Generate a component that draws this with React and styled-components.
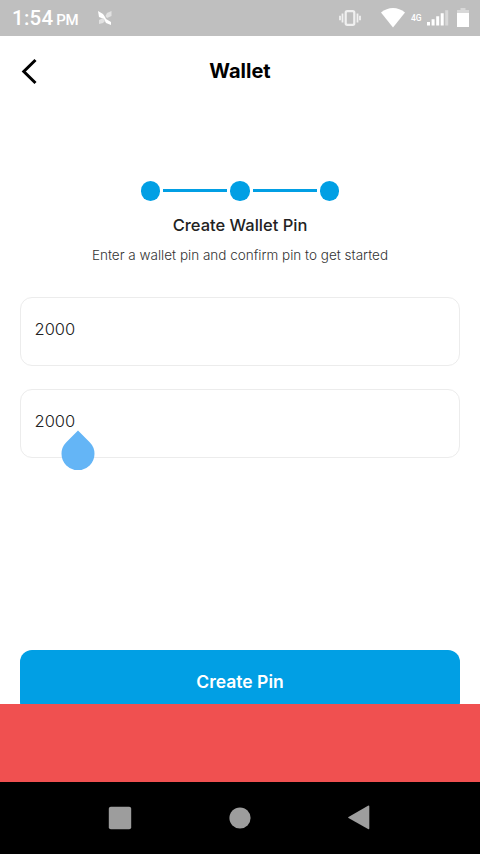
import React from 'react';
import styled, { createGlobalStyle } from 'styled-components';

const GlobalStyle = createGlobalStyle`
  * {
    box-sizing: border-box;
  }

  body {
    margin: 0;
    background: #ffffff;
    font-family: Inter, 'Open Sans', sans-serif;
  }
`;

const Screen = styled.div`
  display: flex;
  flex-direction: column;
  width: 480px;
  height: 854px;
  overflow: hidden;
`;

const StatusBar = styled.div`
  display: flex;
  flex: none;
  align-items: center;
  height: 36px;
  padding: 0 11px 0 12px;
  background: #bfbfbf;
  color: #ffffff;
  font-family: Roboto, sans-serif;
  font-weight: 500;
`;

const Clock = styled.div`
  display: flex;
  align-items: baseline;
  gap: 3px;
  width: 86px;
  padding-top: 2px;
  font-size: 20.5px;
  line-height: 24px;
  letter-spacing: 0.25px;
`;

const Period = styled.span`
  font-size: 15px;
  letter-spacing: -0.4px;
`;

const StatusIcons = styled.div`
  display: flex;
  align-items: center;
  margin-left: auto;
`;

const StatusIcon = styled.svg`
  display: block;
  flex: none;
  margin-right: ${({ $gap }) => $gap || 0}px;
`;

const Network = styled.span`
  width: 16px;
  font-size: 8.5px;
  line-height: 10px;
`;

const Page = styled.main`
  display: flex;
  flex: none;
  flex-direction: column;
  height: 668px;
  padding: 0 20px;
  overflow: hidden;
  background: #ffffff;
`;

const Header = styled.header`
  display: grid;
  flex: none;
  grid-template-columns: 40px 1fr 40px;
  align-items: center;
  height: 70px;
`;

const BackButton = styled.button`
  display: flex;
  padding: 0;
  border: none;
  background: transparent;
`;

const Title = styled.h1`
  margin: 0;
  font-size: 20px;
  font-weight: 700;
  line-height: 28px;
  letter-spacing: ${({ $spacing }) => $spacing || 0}px;
  text-align: center;
  color: #000000;
`;

const Steps = styled.div`
  display: flex;
  align-items: center;
  justify-content: center;
  gap: 3px;
  margin-top: 75px;
`;

const StepDot = styled.span`
  width: 19.5px;
  height: 19.5px;
  border-radius: 50%;
  background: #019fe4;
`;

const StepLine = styled.span`
  width: 64px;
  height: 3px;
  background: #019fe4;
`;

const Heading = styled.h2`
  margin: 12px 0 0;
  font-size: 16.5px;
  font-weight: 500;
  line-height: 24px;
  text-align: center;
  color: #222222;
`;

const Hint = styled.p`
  margin: 8px 0 0;
  font-size: 13.5px;
  font-weight: 300;
  line-height: 20px;
  text-align: center;
  color: #333333;
`;

const Fields = styled.div`
  display: grid;
  gap: 23px;
  margin-top: 32px;
`;

const Field = styled.div`
  position: relative;
  height: 69px;
  padding: 19px 13.5px;
  border: 1.5px solid #ececec;
  border-radius: 12px;
  font-size: 16.5px;
  font-weight: 300;
  line-height: 24px;
  color: #222222;
`;

// Hangs from the text cursor, on top of the field border
const CursorHandle = styled.svg`
  position: absolute;
  top: 40px;
  left: 40px;
`;

const SubmitButton = styled.button`
  flex: none;
  height: 64px;
  margin-top: 192px;
  padding: 0;
  border: none;
  border-radius: 12px;
  background: #019fe4;
  font-family: inherit;
  font-size: 17.5px;
  font-weight: 600;
  color: #ffffff;
`;

const ErrorBanner = styled.div`
  flex: none;
  height: 78px;
  background: #f05050;
`;

const NavBar = styled.nav`
  display: flex;
  flex: none;
  align-items: center;
  justify-content: space-between;
  height: 72px;
  padding: 0 108px;
  background: #000000;
`;

const NavIcon = styled.svg`
  display: block;
  fill: #9d9d9d;
`;

const NotificationIcon = () => (
  <StatusIcon width="14" height="14" viewBox="0 0 14 14">
    <path d="M0 0l5 3 2 3 1 2 5 3v3l-5-2-2-4-5-2z" fill="#fff" />
    <path d="M13.5 0v5L9 7 7.5 5 9 2zM1 13V9l4-2 2 3-2 2z" fill="#e1e1e1" />
  </StatusIcon>
);

const VibrateIcon = () => (
  <StatusIcon width="22" height="16" viewBox="0 0 22 16" $gap={20}>
    <rect x="6.7" y="1.2" width="8.6" height="13.6" rx="1.5" fill="none" stroke="#f0f0f0" strokeWidth="2.2" />
    <path d="M3.5 3.5v9M18.5 3.5v9M1 5.7v4.6M21 5.7v4.6" stroke="#f0f0f0" strokeWidth="1.8" />
  </StatusIcon>
);

const WifiIcon = () => (
  <StatusIcon width="24" height="20" viewBox="0 0 24 20" $gap={6}>
    <path d="M0 4.6C7-1.5 17-1.5 24 4.6L12 19.5z" fill="#fff" />
  </StatusIcon>
);

const SignalIcon = () => (
  <StatusIcon width="22" height="16" viewBox="0 0 22 16" $gap={8}>
    <path d="M0 12h3v3.5H0zM4.6 9.3h3v6.2h-3zM9.2 6.2h3v9.3h-3zM13.7 3.2h3v12.3h-3z" fill="#fff" />
    <path d="M18.2 0.2h3v15.3h-3z" fill="#d8d8d8" />
  </StatusIcon>
);

const BatteryIcon = () => (
  <StatusIcon width="12" height="20" viewBox="0 0 12 20">
    <path d="M0 2h3.5V0h5v2H12v4H0z" fill="#d8d8d8" />
    <path d="M0 5h12v14H0z" fill="#fff" />
  </StatusIcon>
);

export default function App() {
  return (
    <>
      <GlobalStyle />
      <Screen>
        <StatusBar>
          <Clock>
            1:54 <Period>PM</Period>
          </Clock>
          <NotificationIcon />
          <StatusIcons>
            <VibrateIcon />
            <WifiIcon />
            <Network>4G</Network>
            <SignalIcon />
            <BatteryIcon />
          </StatusIcons>
        </StatusBar>

        <Page>
          <Header>
            <BackButton aria-label="Back">
              <svg width="20" height="28" viewBox="0 0 20 28">
                <path d="M15.5 3L3.8 14.5 15.5 26" fill="none" stroke="#000" strokeWidth="3" />
              </svg>
            </BackButton>
            <Title>Wallet</Title>
          </Header>

          <Steps>
            <StepDot />
            <StepLine />
            <StepDot />
            <StepLine />
            <StepDot />
          </Steps>

          <Heading>Create Wallet Pin</Heading>
          <Hint>Enter a wallet pin and confirm pin to get started</Hint>

          <Fields>
            <Field>2000</Field>
            <Field>
              2000
              <CursorHandle width="34" height="40" viewBox="0 0 34 40">
                <path d="M17 0.5L28.7 12.2A16.5 16.5 0 1 1 5.3 12.2z" fill="#64b5f6" />
              </CursorHandle>
            </Field>
          </Fields>

          <SubmitButton>Create Pin</SubmitButton>
        </Page>

        <ErrorBanner />

        <NavBar>
          <NavIcon width="24" height="24" viewBox="0 0 24 24">
            <rect x="0.8" y="0.8" width="22.4" height="22.4" rx="2" />
          </NavIcon>
          <NavIcon width="22" height="22" viewBox="0 0 22 22">
            <circle cx="11" cy="11" r="10.6" />
          </NavIcon>
          <NavIcon width="24" height="26" viewBox="0 0 24 26">
            <path d="M0.5 12L20 0.8q1.3-0.6 1.3 0.8v21.6q0 1.4-1.3 0.8L0.5 13q-0.7-0.5 0-1z" />
          </NavIcon>
        </NavBar>
      </Screen>
    </>
  );
}
